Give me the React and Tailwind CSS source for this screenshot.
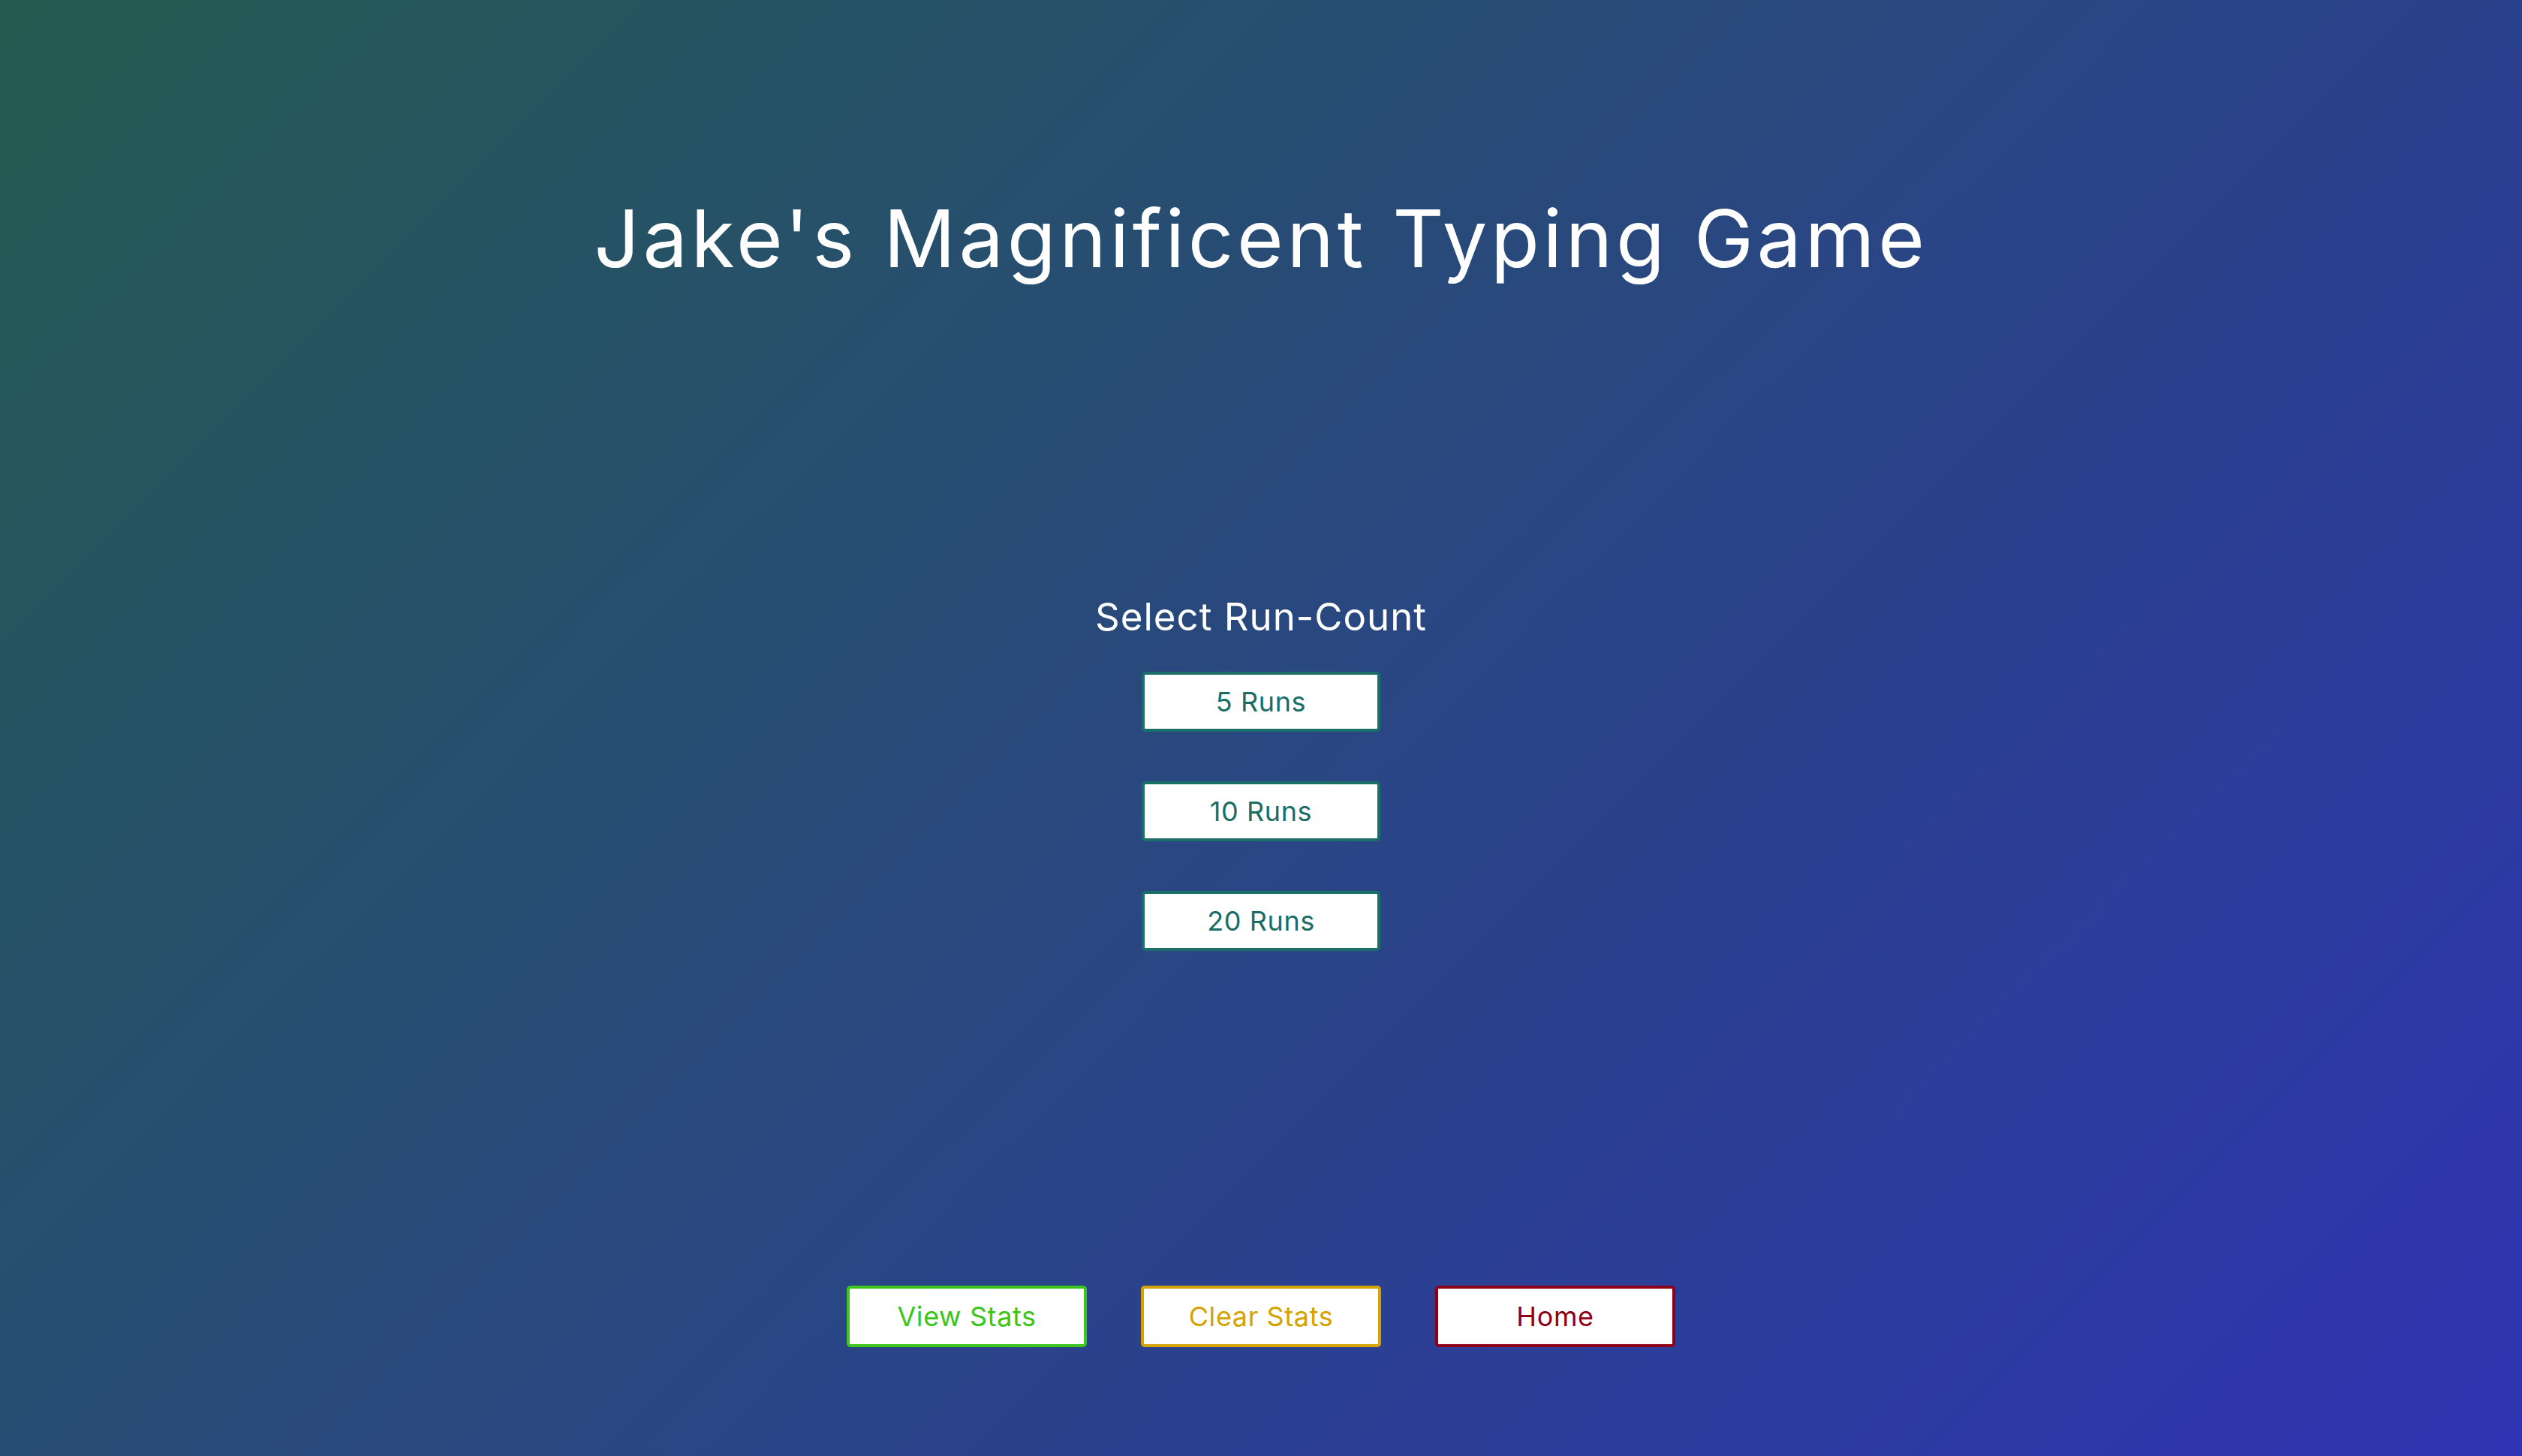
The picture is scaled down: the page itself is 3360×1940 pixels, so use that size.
import React from "react";

export default function App() {
  const runs = ["5 Runs", "10 Runs", "20 Runs"];
  return (
    <div className="w-full h-screen flex flex-col items-center bg-[linear-gradient(135deg,#235b4f,#2f33b2)] font-['Inter',sans-serif] text-white overflow-hidden">
      <h1 className="pt-[265px] text-[106px] leading-none font-normal tracking-[4.6px]">
        Jake's Magnificent Typing Game
      </h1>
      <h2 className="mt-[425px] text-[51px] leading-none font-normal tracking-[1px]">Select Run-Count</h2>
      <div className="mt-[48px] flex flex-col gap-[66px]">
        {runs.map((r) => (
          <button
            key={r}
            className="w-[318px] h-[80px] bg-white border-[4px] border-[#1b6f69] rounded-[5px] text-[#196d66] text-[36px] leading-none tracking-[0.6px] flex items-center justify-center"
          >
            {r}
          </button>
        ))}
      </div>
      <div className="mt-[446px] flex gap-[72px]">
        <button className="w-[320px] h-[82px] bg-white border-[4px] border-[#3cc51a] rounded-[5px] text-[#3cc51a] text-[36px] leading-none tracking-[0.6px] flex items-center justify-center">
          View Stats
        </button>
        <button className="w-[320px] h-[82px] bg-white border-[4px] border-[#d5a300] rounded-[5px] text-[#d5a300] text-[36px] leading-none tracking-[0.6px] flex items-center justify-center">
          Clear Stats
        </button>
        <button className="w-[320px] h-[82px] bg-white border-[4px] border-[#8e0016] rounded-[5px] text-[#8e0016] text-[36px] leading-none tracking-[0.6px] flex items-center justify-center">
          Home
        </button>
      </div>
    </div>
  );
}
